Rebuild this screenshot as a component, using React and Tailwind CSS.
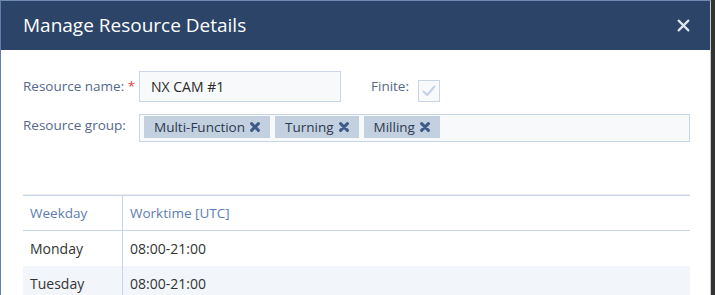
import React from "react";

function XIcon({ className }) {
  return (
    <svg viewBox="0 0 10 10" className={className}>
      <path d="M1.6 1.6 L8.4 8.4 M8.4 1.6 L1.6 8.4" stroke="currentColor" strokeWidth="3" strokeLinecap="round" />
    </svg>
  );
}

function Tag({ label }) {
  return (
    <div className="flex h-[22px] items-center gap-[5px] bg-[#c3d0e0] pl-[10px] pr-[10px] text-[13.5px] text-[#2c3a4f]">
      <span>{label}</span>
      <XIcon className="h-[10px] w-[10px] text-[#3d5b86]" />
    </div>
  );
}

export default function App() {
  const rows = [
    ["Monday", "08:00-21:00"],
    ["Tuesday", "08:00-21:00"],
  ];
  return (
    <div
      className="flex h-[295px] w-[715px] overflow-hidden bg-[#333333]"
      style={{ fontFamily: '"Segoe UI", "Open Sans", sans-serif' }}
    >
      <div className="flex h-full w-[711px] flex-col border-l border-t border-r border-l-[#5f7eab] border-t-[#6f8bb3] border-r-[#c9c9c9] bg-white">
        <div className="flex h-[49px] shrink-0 items-center justify-between bg-[#2b4467] pl-[22px] pr-[20px]">
          <span className="text-[19px] leading-none text-white">Manage Resource Details</span>
          <svg viewBox="0 0 12 12" className="h-[13px] w-[13px] text-[#dfe6f0]">
            <path d="M1.5 1.5 L10.5 10.5 M10.5 1.5 L1.5 10.5" stroke="currentColor" strokeWidth="2" strokeLinecap="round" />
          </svg>
        </div>
        <div className="flex flex-col pl-[22px] pr-[20px] pt-[21px]">
          <div className="flex h-[31px] items-center">
            <div className="w-[116px] text-[13.5px] text-[#56698a]">
              Resource name: <span className="text-[#e0474c]">*</span>
            </div>
            <div className="flex h-[31px] w-[202px] items-center border border-[#c9d6e8] bg-[#f7f9fb] pl-[11px] text-[14px] text-[#2a2a2a]">
              NX CAM #1
            </div>
            <div className="ml-[30px] text-[13.5px] text-[#56698a]">Finite:</div>
            <div className="ml-[9px] mt-[8px] flex h-[22px] w-[22px] items-center justify-center border border-[#c9d6e8] bg-[#f7f9fb]">
              <svg viewBox="0 0 16 16" className="h-[16px] w-[16px]">
                <path d="M2.5 8.5 L6.2 12 L13.5 3.5" fill="none" stroke="#c3d2e6" strokeWidth="2" strokeLinecap="round" strokeLinejoin="round" />
              </svg>
            </div>
          </div>
          <div className="mt-[12px] flex items-start">
            <div className="w-[116px] pt-[1px] text-[13.5px] text-[#56698a]">Resource group:</div>
            <div className="flex h-[28px] w-[551px] items-start gap-[5px] border border-[#c9d6e8] bg-[#f7f9fb] pl-[4px] pt-[1px]">
              <Tag label="Multi-Function" />
              <Tag label="Turning" />
              <Tag label="Milling" />
            </div>
          </div>
          <div className="mt-[53px] w-[667px] border-t border-t-[#c5d5ea] shadow-[0_-1px_0_#eeeeee]">
            <div className="flex h-[35px] border-b border-b-[#c5d5ea] text-[13.5px] text-[#5d7cb2]">
              <div className="flex w-[100px] items-center border-r border-r-[#c5d5ea] pl-[7px]">Weekday</div>
              <div className="flex flex-1 items-center pl-[7px]">Worktime [UTC]</div>
            </div>
            {rows.map(([d, t], i) => (
              <div key={d} className={`flex h-[35px] text-[14px] text-[#333333] ${i % 2 === 1 ? "bg-[#f2f6fa]" : "bg-white"}`}>
                <div className="flex w-[100px] items-center border-r border-r-[#c5d5ea] pl-[7px]">{d}</div>
                <div className="flex flex-1 items-center pl-[7px]">{t}</div>
              </div>
            ))}
          </div>
        </div>
      </div>
    </div>
  );
}
